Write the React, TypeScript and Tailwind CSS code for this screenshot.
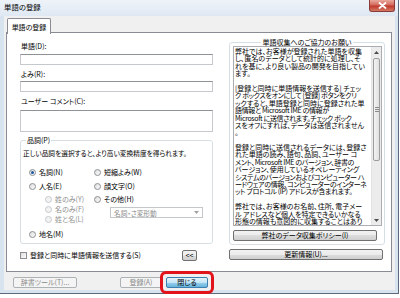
import React from 'react';

const font = "font-['Noto_Sans_CJK_JP','Noto_Sans',sans-serif] [font-feature-settings:'palt']";

const infoLines = [
  '弊社では、お客様が登録された単語を収集',
  'し、匿名のデータとして統計的に処理し、そ',
  'れを基に、より良い製品の開発を目指してい',
  'ます。',
  '',
  '[登録と同時に単語情報を送信する] チェッ',
  'ク ボックスをオンにして [登録] ボタンをクリ',
  'ックすると、単語登録と同時に登録された単',
  '語情報と Microsoft IME の情報が',
  'Microsoft に送信されます。チェック ボック',
  'スをオフにすれば、データは送信されません',
  '。',
  '',
  '登録と同時に送信されるデータには、登録さ',
  'れた単語の読み、語句、品詞、ユーザー コ',
  'メント、Microsoft IME のバージョン、辞書の',
  'バージョン、使用しているオペレーティング',
  'システムのバージョンおよびコンピューター ハ',
  'ードウェアの情報、コンピューターのインターネ',
  'ット プロトコル (IP) アドレスが含まれます。',
  '',
  '弊社では、お客様のお名前、住所、電子メー',
  'ル アドレスなど個人を特定できるいかなる',
  '形態の情報も意図的に収集することはあり',
];

type BtnProps = { children: React.ReactNode; className?: string; disabled?: boolean; focus?: boolean };

const Btn: React.FC<BtnProps> = ({ children, className = '', disabled = false, focus = false }) => {
  const look = disabled
    ? 'border-[#adb2b5] bg-[#f4f4f4] text-[#8a8a8a]'
    : focus
    ? 'border-[#3c7fb1] bg-[linear-gradient(#e5f4fc,#c4e5f6_50%,#98d1ef_50%,#68b3db)] text-black'
    : 'border-[#707070] bg-[linear-gradient(#f2f2f2,#ebebeb_50%,#dddddd_50%,#cfcfcf)] text-black';
  return (
    <div className={`flex items-center justify-center rounded-[2px] border text-[7px] leading-none ${look} ${className}`}>
      {children}
    </div>
  );
};

const Radio: React.FC<{ label: string; checked?: boolean; disabled?: boolean; className?: string }> = ({
  label,
  checked = false,
  disabled = false,
  className = '',
}) => (
  <div className={`flex items-center h-[8px] ${className}`}>
    <span
      className={`w-[7px] h-[7px] rounded-full border flex items-center justify-center ${
        disabled ? 'border-[#c6c9cc] bg-[#f3f3f3]' : 'border-[#8d9093] bg-[linear-gradient(135deg,#dcdcdc,#fdfdfd)]'
      }`}
    >
      {checked && <span className="w-[3px] h-[3px] rounded-full bg-[#1d58a0]" />}
    </span>
    <span className={`ml-[3px] text-[7px] leading-[8px] ${disabled ? 'text-[#8f8f8f]' : 'text-black'}`}>{label}</span>
  </div>
);

const Field: React.FC<{ className?: string }> = ({ className = '' }) => (
  <div className={`w-full bg-white border border-[#c5c8cd] border-t-[#8e9196] ${className}`} />
);

export default function App() {
  return (
    <div className={`relative w-[400px] h-[298px] bg-white overflow-hidden ${font}`}>
      <div className="w-[399px] h-[294px] flex flex-col bg-[#d8e3f0] border-r border-b border-[#5d6a7b]">
        {/* title bar */}
        <div className="h-[16px] flex items-start bg-[linear-gradient(#eef3f9,#dfe8f3)]">
          <span className="ml-[4px] mt-[3px] text-[7.4px] leading-[8px] text-black">単語の登録</span>
          <div className="ml-auto mr-[3px] w-[26px] h-[12px] rounded-b-[3px] border border-t-0 border-[#8a3b37] bg-[linear-gradient(#e9a99c,#d46a5d_45%,#c0392b_55%,#d47a66)] flex items-center justify-center">
            <svg width="9" height="7" viewBox="0 0 9 7">
              <path d="M1.5 1 L7.5 6 M7.5 1 L1.5 6" stroke="#ffffff" strokeWidth="1.8" strokeLinecap="round" />
            </svg>
          </div>
        </div>

        <div className="flex flex-1 min-h-0">
          <div className="w-[4px]" />
          {/* client */}
          <div className="flex-1 flex flex-col bg-[#f0f0f0]">
            {/* tab header */}
            <div className="h-[17px] pt-[2px] pl-[3px] flex">
              <div className="relative z-10 h-[16px] w-[44px] bg-white border border-b-0 border-[#898c95] rounded-t-[2px] flex items-center justify-center">
                <span className="text-[7px] leading-[8px] text-black">単語の登録</span>
              </div>
            </div>
            {/* tab panel */}
            <div className="-mt-[1px] ml-[2px] mr-[3px] h-[240px] bg-white border border-[#898c95] flex pl-[13px] pt-[9px]">
              {/* left column */}
              <div className="w-[193px] flex flex-col">
                <div className="h-[8px] pl-[1px] text-[7px] leading-[8px]">単語(D):</div>
                <Field className="mt-[4px] h-[11px]" />
                <div className="mt-[5px] h-[8px] pl-[1px] text-[7px] leading-[8px]">よみ(R):</div>
                <Field className="mt-[3px] h-[11px]" />
                <div className="mt-[5px] h-[8px] pl-[1px] text-[7px] leading-[8px]">ユーザー コメント(C):</div>
                <Field className="mt-[5px] h-[22px]" />

                <fieldset className="mt-[4px] w-[193px] border border-[#d5dfe5] rounded-[3px] pb-[5px]">
                  <legend className="ml-[5px] px-[1px] h-[8px] text-[7px] leading-[8px]">品詞(P)</legend>
                  <div className="mt-[5px] ml-[2px] h-[8px] text-[6.7px] leading-[8px] whitespace-nowrap">
                    正しい品詞を選択すると、より高い変換精度を得られます。
                  </div>
                  <div className="flex mt-[11px]">
                    <div className="w-[65px] ml-[8px] flex flex-col">
                      <Radio label="名詞(N)" checked />
                      <Radio label="人名(E)" className="mt-[6px]" />
                      <Radio label="姓のみ(Y)" disabled className="mt-[5px] ml-[16px]" />
                      <Radio label="名のみ(F)" disabled className="mt-[2px] ml-[16px]" />
                      <Radio label="姓と名(L)" disabled className="mt-[2px] ml-[16px]" />
                      <Radio label="地名(M)" className="mt-[7px]" />
                    </div>
                    <div className="flex flex-col">
                      <Radio label="短縮よみ(W)" />
                      <Radio label="顔文字(O)" className="mt-[6px]" />
                      <Radio label="その他(H)" className="mt-[5px]" />
                      <div className="mt-[4px] ml-[16px] w-[93px] h-[11px] border border-[#c4c7ca] bg-white flex items-center pl-[3px] pr-[3px]">
                        <span className="text-[6.7px] leading-[8px] text-[#8a8a8a]">名詞・さ変形動</span>
                        <svg className="ml-auto" width="5" height="3" viewBox="0 0 5 3">
                          <path d="M0 0 L5 0 L2.5 3 Z" fill="#a0a0a0" />
                        </svg>
                      </div>
                    </div>
                  </div>
                </fieldset>

                <div className="mt-[5px] h-[12px] flex items-center">
                  <span className="w-[7px] h-[7px] border border-[#8d9093] bg-[linear-gradient(135deg,#dcdcdc,#fdfdfd)]" />
                  <span className="ml-[3px] text-[7px] leading-[8px]">登録と同時に単語情報を送信する(S)</span>
                  <Btn className="ml-auto mr-[16px] w-[15px] h-[11px]">&lt;&lt;</Btn>
                </div>
              </div>

              {/* right column */}
              <div className="ml-[16px] w-[156px] flex flex-col">
                <fieldset className="w-[156px] border border-[#d5dfe5] rounded-[3px] pb-[3px] -mt-[4px]">
                  <legend className="mx-auto px-[1px] h-[8px] text-[7px] leading-[8px]">単語収集へのご協力のお願い</legend>
                  <div className="ml-[3px] w-[149px] h-[180px] border border-[#abadb3] flex overflow-hidden">
                    <div className="flex-1 overflow-hidden pl-[1px] pt-[1px]">
                      {infoLines.map((l, i) => (
                        <div
                          key={i}
                          className={`h-[7.4px] text-[7px] leading-[7.4px] whitespace-nowrap ${
                            l.length > 21 ? 'tracking-[-0.35px]' : 'tracking-normal'
                          }`}
                        >
                          {l}
                        </div>
                      ))}
                    </div>
                    <div className="w-[10px] bg-[#ececec] flex flex-col border-l border-[#e4e4e4]">
                      <div className="h-[10px] flex items-center justify-center">
                        <svg width="5" height="3" viewBox="0 0 5 3">
                          <path d="M0 3 L5 3 L2.5 0 Z" fill="#4d4d4d" />
                        </svg>
                      </div>
                      <div className="mt-[1px] mx-[1px] h-[103px] rounded-[2px] border border-[#9c9c9c] bg-[linear-gradient(90deg,#f3f3f3,#e0e0e0)] flex flex-col items-center justify-center gap-[1px]">
                        <span className="w-[4px] h-px bg-[#8a8a8a]" />
                        <span className="w-[4px] h-px bg-[#8a8a8a]" />
                        <span className="w-[4px] h-px bg-[#8a8a8a]" />
                      </div>
                      <div className="mt-auto h-[10px] flex items-center justify-center">
                        <svg width="5" height="3" viewBox="0 0 5 3">
                          <path d="M0 0 L5 0 L2.5 3 Z" fill="#4d4d4d" />
                        </svg>
                      </div>
                    </div>
                  </div>
                  <Btn className="mt-[4px] ml-[3px] w-[144px] h-[11px]">弊社のデータ収集ポリシー(I)</Btn>
                </fieldset>
                <Btn className="mt-[4px] w-[154px] h-[11px]">更新情報(U)...</Btn>
              </div>
            </div>

            {/* bottom buttons */}
            <div className="mt-[5px] flex">
              <Btn disabled className="ml-[9px] w-[64px] h-[11px]">辞書ツール(T)...</Btn>
              <Btn disabled className="ml-[43px] w-[42px] h-[11px]">登録(A)</Btn>
              <Btn focus className="ml-[4px] w-[42px] h-[11px]">閉じる</Btn>
            </div>
          </div>
          <div className="w-[3px]" />
        </div>
        <div className="h-[3px]" />
      </div>

      {/* annotation */}
      <div className="absolute left-[160px] top-[271px] w-[54px] h-[23px] rounded-[6px] border-[3px] border-[#e3131b]" />
    </div>
  );
}
